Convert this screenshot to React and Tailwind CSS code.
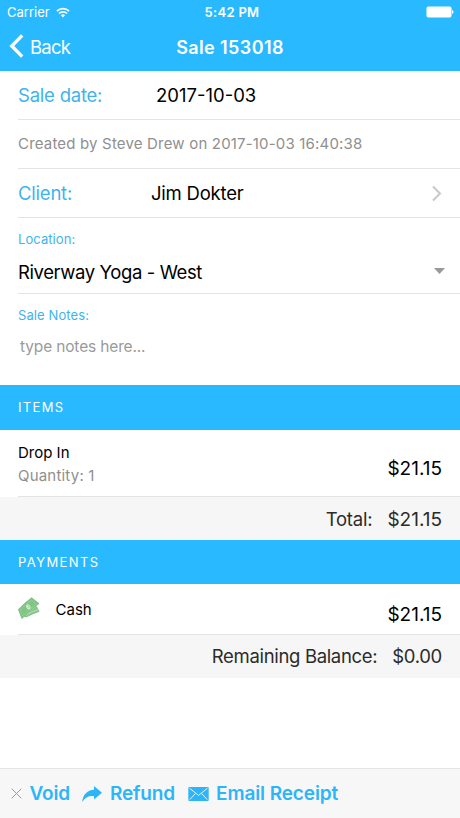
function WifiIcon() {
  return (
    <svg width="14" height="11" viewBox="0 0 14 11" fill="none" stroke="white" strokeWidth="1.7">
      <path d="M0.9 4.1a8.8 8.8 0 0 1 12.2 0" />
      <path d="M3 6.5a5.8 5.8 0 0 1 8 0" />
      <path d="M7 10.4 4.9 8.2a3.1 3.1 0 0 1 4.2 0z" fill="white" stroke="none" />
    </svg>
  );
}

function CashIcon() {
  return (
    <svg width="22" height="23" viewBox="0 0 22 23">
      <path d="M6 19.5 18.5 9.5 21.2 14.4 Q15 16.5 8.5 20z" fill="#86c58a" stroke="#79b880" strokeWidth="0.6" />
      <path d="M7.5 18.7 Q13 14.5 20 12.7" fill="none" stroke="#d5eccf" strokeWidth="0.7" />
      <path d="M0.4 12.4 Q6.5 6 13.6 0.8 L21 6.6 Q12 13.5 3.9 21.6z" fill="#80c586" stroke="#6cb475" strokeWidth="0.7" />
      <path d="M2.4 12.8 Q7.5 7.2 13.5 2.8 L18.6 6.8 Q11.5 12.2 4.5 19z" fill="none" stroke="#9bd19b" strokeWidth="0.6" />
      <ellipse cx="10.4" cy="9.9" rx="2" ry="2.7" transform="rotate(-30 10.4 9.9)" fill="#d3edcd" />
      <path d="M9.5 8.8c1.5-.7 2.1.1 1.2 1s-.4 1.6.9.9" fill="none" stroke="#8ec393" strokeWidth="0.5" />
    </svg>
  );
}

function SectionHeader({ children, className }) {
  return (
    <h2 className={`flex shrink-0 items-center bg-[#29b9ff] pl-[18px] text-[13px] text-white ${className}`}>
      {children}
    </h2>
  );
}

export default function App() {
  return (
    <div className="flex h-[818px] w-[460px] flex-col overflow-hidden bg-white font-['Inter',sans-serif] whitespace-nowrap text-black">
      <header className="h-[71px] shrink-0 bg-[#29b9ff] text-white">
        <div className="grid h-[25px] grid-cols-3 items-center pr-[6px] pl-[7px] text-[13px]">
          <div className="flex items-center gap-[6px]">
            <span>Carrier</span>
            <WifiIcon />
          </div>
          <span className="pl-[3px] text-center font-semibold tracking-[0.3px]">5:42 PM</span>
          <svg className="mb-[2px] justify-self-end" width="28" height="12" viewBox="0 0 28 12" fill="white">
            <rect x="0.5" y="0.5" width="25" height="11" rx="1.7" />
            <path d="M26 4q1.5.6 1.5 2T26 8z" />
          </svg>
        </div>
        <div className="grid h-[44px] grid-cols-3 items-center pr-[9px] pl-[9px]">
          <div className="flex items-center gap-[6px]">
            <svg className="mb-[2px]" width="15" height="24" viewBox="0 0 15 24" fill="none" stroke="white" strokeWidth="3.4">
              <path d="M13.2 1.4 2.8 12l10.4 10.6" />
            </svg>
            <span className="pt-px text-[18.5px] tracking-[-0.8px]">Back</span>
          </div>
          <h1 className="text-center text-[18px] font-semibold tracking-[0.4px]">Sale 153018</h1>
        </div>
      </header>

      <div className="ml-[18px] flex h-[49px] shrink-0 items-center border-b border-[#e4e4e6] pt-px text-[18.5px]">
        <span className="w-[138px] tracking-[-0.22px] text-[#3eb4ee]">Sale date:</span>
        <span>2017-10-03</span>
      </div>
      <div className="ml-[18px] flex h-[49px] shrink-0 items-center border-b border-[#e4e4e6] pt-px text-[15px] tracking-[0.18px] text-[#8f8f8f]">
        Created by Steve Drew on 2017-10-03 16:40:38
      </div>
      <div className="ml-[18px] flex h-[49px] shrink-0 items-center border-b border-[#e4e4e6] text-[18.5px] tracking-[-0.22px]">
        <span className="w-[133px] pt-[2px] text-[#3eb4ee]">Client:</span>
        <span className="pt-[2px]">Jim Dokter</span>
        <svg className="mr-[18px] ml-auto" width="11" height="17" viewBox="0 0 11 17" fill="none" stroke="#c7c7cc" strokeWidth="2">
          <path d="m2 1.5 7 7-7 7" />
        </svg>
      </div>
      <div className="ml-[18px] h-[76px] shrink-0 border-b border-[#e4e4e6] pt-[11px]">
        <div className="text-[13px] leading-5 tracking-[0.07px] text-[#3eb4ee]">Location:</div>
        <div className="mt-[9px] flex h-7 items-center pr-[15px] text-[18.5px] leading-7 tracking-[-0.4px]">
          <span>Riverway Yoga - West</span>
          <svg className="mt-[-2px] ml-auto" width="11" height="6" viewBox="0 0 11 6" fill="#999">
            <path d="M0 0h11L5.5 6z" />
          </svg>
        </div>
      </div>
      <div className="ml-[18px] h-[91px] shrink-0 pt-[11px]">
        <div className="text-[13px] leading-5 tracking-[0.1px] text-[#3eb4ee]">Sale Notes:</div>
        <div className="mt-[10px] pl-[2px] text-[15.5px] leading-6 tracking-[-0.15px] text-[#9a9a9a]">type notes here...</div>
      </div>

      <SectionHeader className="h-[45px] tracking-[1.35px]">ITEMS</SectionHeader>
      <div className="ml-[18px] flex h-[67px] shrink-0 justify-between border-b border-[#e4e4e6] pt-[11px] pr-[18px]">
        <div className="text-[15px] leading-[23px]">
          <div>Drop In</div>
          <div className="tracking-[0.2px] text-[#8f8f8f]">Quantity: 1</div>
        </div>
        <span className="pt-[14px] text-[19px] leading-7">$21.15</span>
      </div>
      <div className="flex h-[43px] shrink-0 items-baseline justify-end gap-[15px] bg-[#f6f6f6] pt-2 pr-[18px] leading-7 text-[#2b2b2b]">
        <span className="text-[18.5px] tracking-[-0.2px]">Total:</span>
        <span className="text-[19px]">$21.15</span>
      </div>

      <SectionHeader className="h-[44px] pt-px tracking-[1.4px]">PAYMENTS</SectionHeader>
      <div className="ml-[18px] flex h-[51px] shrink-0 items-start border-b border-[#e4e4e6] pr-[18px]">
        <div className="pt-[13px]">
          <CashIcon />
        </div>
        <span className="ml-[15.5px] pt-[14px] text-[15px] leading-6">Cash</span>
        <span className="ml-auto pt-[17px] text-[19px] leading-7">$21.15</span>
      </div>
      <div className="flex h-[43px] shrink-0 items-center justify-end gap-[15px] bg-[#f6f6f6] pr-[18px] text-[18.5px] text-[#2b2b2b]">
        <span className="tracking-[-0.33px]">Remaining Balance:</span>
        <span className="tracking-[-0.3px]">$0.00</span>
      </div>

      <footer className="mt-auto flex h-[50px] shrink-0 items-center border-t border-[#e4e4e4] bg-[#f7f7f8] pl-[11px] text-[19px] font-semibold text-[#2db5f8]">
        <svg width="11" height="11" viewBox="0 0 11 11" fill="none" stroke="#4db4ec" strokeWidth="1">
          <path d="m.7.7 9.6 9.6M10.3.7.7 10.3" />
        </svg>
        <span className="w-[60px] pt-[2px] pl-[7.5px] tracking-[-0.15px]">Void</span>
        <svg width="20" height="16" viewBox="0 0 20 16" fill="currentColor">
          <path d="M12 0 20 6.8 12 13.6V10.2C7.2 9.6 3.3 11.2.2 16 .8 9 5 4.2 12 3.8z" />
        </svg>
        <span className="w-[85.5px] pt-[2px] pl-[8px] tracking-[-0.15px]">Refund</span>
        <svg width="21" height="14" viewBox="0 0 21 14">
          <rect x="0.3" width="20.4" height="14" rx="1" fill="currentColor" />
          <path d="m1.5 1.2 9 7.2 9-7.2M1.7 12.6l5.6-6M19.3 12.6l-5.6-6" fill="none" stroke="#f7f7f8" strokeWidth="0.9" />
        </svg>
        <span className="ml-[7.5px] pt-[2px] tracking-[-0.1px]">Email Receipt</span>
      </footer>
    </div>
  );
}
